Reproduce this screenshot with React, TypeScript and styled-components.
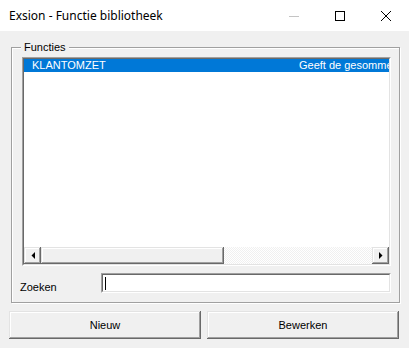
import React from "react";
import styled, { createGlobalStyle } from "styled-components";

const Global = createGlobalStyle`
  html, body { margin: 0; padding: 0; background: #f0f0f0; }
  * { box-sizing: border-box; }
`;

const Window = styled.div`
  width: 409px;
  height: 348px;
  display: flex;
  flex-direction: column;
  font-family: "Liberation Sans", Arial, sans-serif;
  font-size: 11px;
  color: #000;
  overflow: hidden;
`;

const TitleBar = styled.div`
  height: 31px;
  flex: 0 0 31px;
  background: #fff;
  display: flex;
  align-items: center;
`;

const Title = styled.div`
  flex: 1;
  padding-left: 9px;
  font-family: "Noto Sans", "Open Sans", sans-serif;
  font-size: 12px;
  line-height: 16px;
  white-space: nowrap;
`;

const CaptionButton = styled.div`
  width: 46px;
  height: 31px;
  display: flex;
  align-items: center;
  justify-content: center;
`;

const Client = styled.div`
  flex: 1;
  background: #f0f0f0;
  padding: 16px 9px 9px 9px;
  display: flex;
  flex-direction: column;
`;

const GroupBox = styled.div`
  position: relative;
  margin-left: 2px;
  height: 256px;
  border: 1px solid #a0a0a0;
  box-shadow: inset 1px 1px 0 #fff, 1px 1px 0 #fff;
  padding: 9px 8px 9px 10px;
  display: flex;
  flex-direction: column;
`;

const Legend = styled.span`
  position: absolute;
  left: 9px;
  top: -8px;
  padding: 0 3px;
  background: #f0f0f0;
  line-height: 14px;
`;

const Sunken = styled.div`
  border-style: solid;
  border-width: 1px;
  border-color: #a0a0a0 #fff #fff #a0a0a0;
  background: #fff;
`;

const ListBox = styled(Sunken)`
  height: 209px;
  display: flex;
`;

const ListInner = styled.div`
  flex: 1;
  display: flex;
  flex-direction: column;
  border-style: solid;
  border-width: 1px;
  border-color: #696969 #e3e3e3 #e3e3e3 #696969;
  min-width: 0;
`;

const Rows = styled.div`
  flex: 1;
  overflow: hidden;
`;

const Row = styled.div<{ $selected?: boolean }>`
  height: 13px;
  display: grid;
  grid-template-columns: 275px 1fr;
  align-items: center;
  white-space: nowrap;
  overflow: hidden;
  line-height: 13px;
  background: ${(p) => (p.$selected ? "#0078d7" : "transparent")};
  color: ${(p) => (p.$selected ? "#fff" : "#000")};
`;

const Cell = styled.span<{ $pad?: number }>`
  padding-left: ${(p) => p.$pad ?? 0}px;
  overflow: hidden;
`;

const ScrollBar = styled.div`
  height: 17px;
  flex: 0 0 17px;
  display: flex;
`;

const Raised = styled.div`
  background: #f0f0f0;
  box-shadow: inset -1px -1px 0 #696969, inset 1px 1px 0 #e3e3e3,
    inset -2px -2px 0 #a0a0a0, inset 2px 2px 0 #fff;
`;

const ArrowButton = styled(Raised)`
  width: 17px;
  flex: 0 0 17px;
  display: flex;
  align-items: center;
  justify-content: center;
`;

const Thumb = styled(Raised)`
  width: 183px;
  flex: 0 0 183px;
`;

const Track = styled.div`
  flex: 1;
  background-color: #fff;
  background-image: repeating-conic-gradient(#f0f0f0 0 25%, #fff 0 50%);
  background-size: 2px 2px;
`;

const SearchRow = styled.div`
  margin-top: 7px;
  height: 20px;
  display: flex;
`;

const Label = styled.span`
  flex: 0 0 81px;
  margin-left: -2px;
  margin-top: 8px;
  line-height: 13px;
`;

const TextBox = styled(Sunken)`
  flex: 1;
  display: flex;
`;

const TextInner = styled.div`
  flex: 1;
  border-style: solid;
  border-width: 1px;
  border-color: #696969 #e3e3e3 #e3e3e3 #696969;
  padding: 2px 0 0 2px;
`;

const Caret = styled.div`
  width: 1px;
  height: 13px;
  background: #000;
`;

const ButtonRow = styled.div`
  margin-top: 8px;
  display: grid;
  grid-template-columns: 192px 192px;
  gap: 6px;
`;

const Button = styled(Raised)`
  height: 28px;
  display: flex;
  align-items: center;
  justify-content: center;
  padding-bottom: 1px;
`;

const LeftArrow = () => (
  <svg width="4" height="7" viewBox="0 0 4 7">
    <polygon points="4,0 4,7 0.5,3.5" fill="#000" />
  </svg>
);

const RightArrow = () => (
  <svg width="4" height="7" viewBox="0 0 4 7">
    <polygon points="0,0 0,7 3.5,3.5" fill="#000" />
  </svg>
);

export default function App() {
  return (
    <>
      <Global />
      <Window>
        <TitleBar>
          <Title>Exsion - Functie bibliotheek</Title>
          <CaptionButton>
            <svg width="10" height="10" viewBox="0 0 10 10">
              <line x1="0" y1="5.5" x2="10" y2="5.5" stroke="#c4c4c4" strokeWidth="1" />
            </svg>
          </CaptionButton>
          <CaptionButton>
            <svg width="10" height="10" viewBox="0 0 10 10">
              <rect x="0.5" y="0.5" width="9" height="9" fill="none" stroke="#000" strokeWidth="1" />
            </svg>
          </CaptionButton>
          <CaptionButton>
            <svg width="10" height="10" viewBox="0 0 10 10">
              <path d="M0 0 L10 10 M10 0 L0 10" stroke="#000" strokeWidth="1" />
            </svg>
          </CaptionButton>
        </TitleBar>
        <Client>
          <GroupBox>
            <Legend>Functies</Legend>
            <ListBox>
              <ListInner>
                <Rows>
                  <Row $selected>
                    <Cell $pad={8}>KLANTOMZET</Cell>
                    <Cell>Geeft de gesommeerde klantomzet</Cell>
                  </Row>
                </Rows>
                <ScrollBar>
                  <ArrowButton>
                    <LeftArrow />
                  </ArrowButton>
                  <Thumb />
                  <Track />
                  <ArrowButton>
                    <RightArrow />
                  </ArrowButton>
                </ScrollBar>
              </ListInner>
            </ListBox>
            <SearchRow>
              <Label>Zoeken</Label>
              <TextBox>
                <TextInner>
                  <Caret />
                </TextInner>
              </TextBox>
            </SearchRow>
          </GroupBox>
          <ButtonRow>
            <Button>Nieuw</Button>
            <Button>Bewerken</Button>
          </ButtonRow>
        </Client>
      </Window>
    </>
  );
}
